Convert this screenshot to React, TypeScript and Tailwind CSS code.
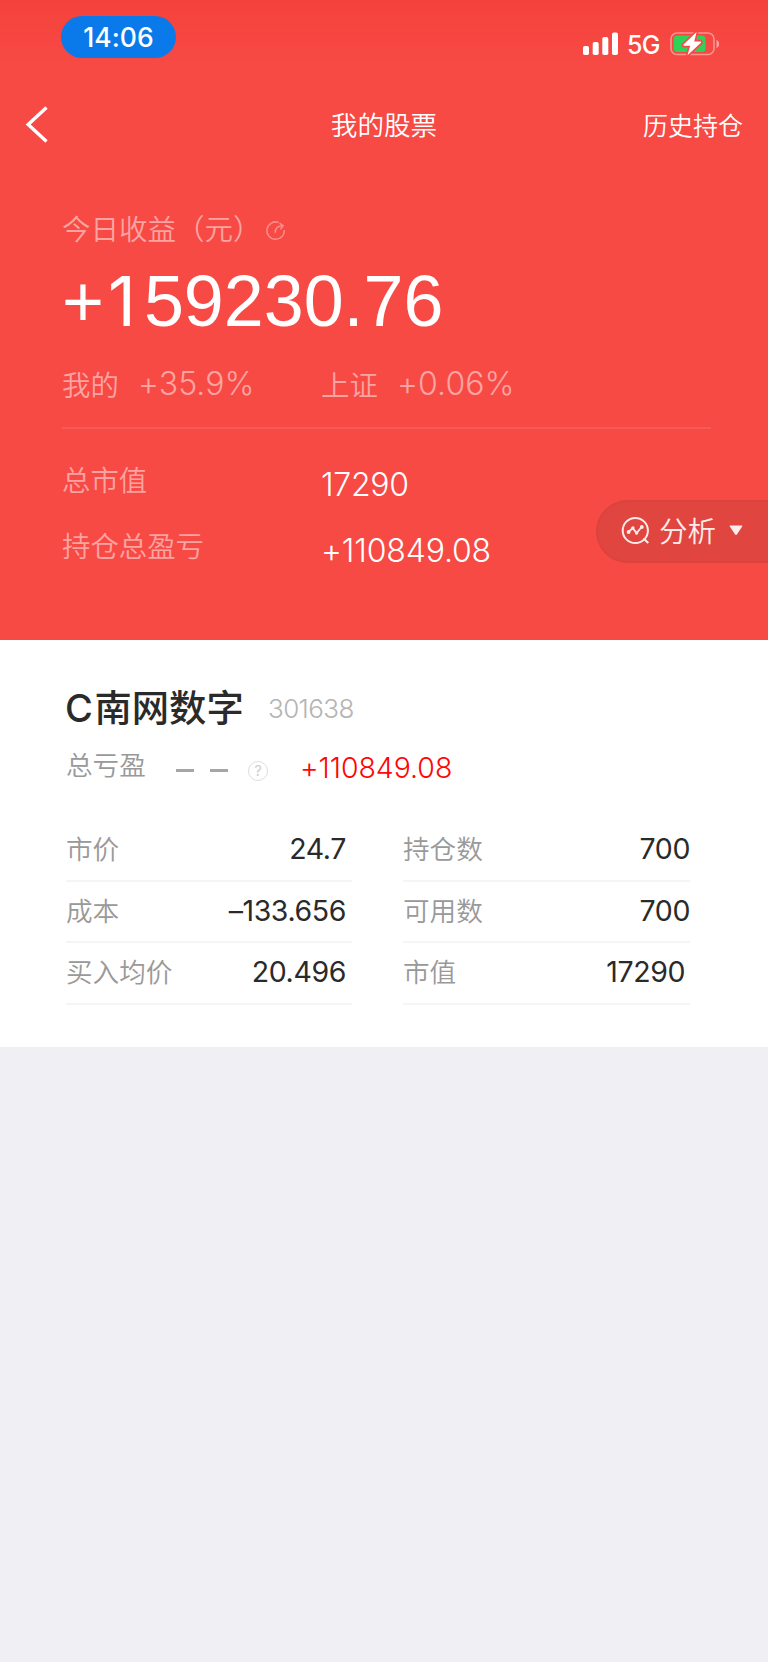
import React from "react";

const CJK = "font-['Noto_Sans_CJK_SC',sans-serif]";
const NUM = "font-['Inter','Noto_Sans_CJK_SC',sans-serif]";

function StatusBar() {
  return (
    <div className="flex h-[88px] items-start justify-between pl-[61px] pr-[48px] pt-4">
      <div
        className={`flex h-[41.5px] w-[115px] items-center justify-center rounded-full bg-[#0a7aeb] pt-px text-[26.5px] font-medium leading-none tracking-[0.1px] ${NUM}`}
      >
        <span>14:06</span>
      </div>
      <div className="mt-4 flex h-[24px] items-center">
        <svg width="36" height="24" viewBox="0 0 36 24" fill="#fff">
          <rect x="0" y="14" width="6" height="9" rx="1.8" />
          <rect x="9.7" y="10" width="6" height="13" rx="1.8" />
          <rect x="19.3" y="5" width="6" height="18" rx="1.8" />
          <rect x="29" y="0.5" width="6" height="22.5" rx="1.8" />
        </svg>
        <span className={`ml-[8px] mt-[2px] w-[35px] text-[25px] font-medium leading-6 tracking-[-0.6px] ${NUM}`}>5G</span>
        <svg className="ml-[8px]" width="50" height="24" viewBox="0 0 50 24">
          <rect x="1" y="1" width="43" height="21.5" rx="6" fill="none" stroke="#fff" strokeOpacity="0.42" strokeWidth="1.6" />
          <path d="M46.5 8v8c1.6-.6 2.6-2.2 2.6-4s-1-3.4-2.6-4z" fill="#fff" fillOpacity="0.5" />
          <rect x="3.6" y="3.4" width="32" height="16.7" rx="3.6" fill="#30d158" />
          <path
            d="M26.6 0 13.6 12.6c-.5.6-.2 1.2.6 1.2h6l-2.7 9.4 13.4-12.4c.5-.6.2-1.3-.6-1.3h-6.1z"
            fill="#fff"
            stroke="#f74a45"
            strokeWidth="3.4"
            strokeLinejoin="round"
            paintOrder="stroke"
          />
        </svg>
      </div>
    </div>
  );
}

function NavBar() {
  return (
    <div className={`grid h-[72px] grid-cols-[1fr_auto_1fr] items-center pl-[25px] pr-[25px] ${CJK}`}>
      <svg width="24" height="38" viewBox="0 0 24 38" fill="none" stroke="#fff" strokeWidth="3.4">
        <path d="M21.5 2.5 3.2 19.5l18.3 17" />
      </svg>
      <h1 className="-mt-px text-[26.6px] font-[350] leading-10">我的股票</h1>
      <button className="-mt-px justify-self-end text-[25px] font-[350] leading-10">历史持仓</button>
    </div>
  );
}

function Analysis() {
  return (
    <button className="absolute right-0 top-[500px] flex h-[63px] w-[172px] items-center rounded-l-full border-2 border-r-0 border-[#da433e] bg-[#e0463f] pl-[23px]">
      <svg className="-mt-[2px]" width="30" height="30" viewBox="0 0 30 30" fill="none" stroke="#fdeceb" strokeWidth="2">
        <circle cx="14.3" cy="14.5" r="12.6" />
        <path d="m22.5 22.5 4.8 4.5" />
        <path d="m7.6 16 4-4 4 5 5-6" strokeWidth="1.8" />
        <g fill="#fdeceb" stroke="none">
          <circle cx="7.6" cy="16" r="1.9" />
          <circle cx="11.9" cy="12" r="1.7" />
          <circle cx="15.6" cy="17" r="1.7" />
          <circle cx="20.8" cy="11" r="1.9" />
        </g>
      </svg>
      <span className={`-mt-[3px] ml-[8px] text-[28.5px] font-[350] leading-10 text-[#fdeceb] ${CJK}`}>分析</span>
      <svg className="-mt-[2px] ml-[13px]" width="14" height="11" viewBox="0 0 14 11">
        <path d="M1.2.5h11.6q1 .2.4 1.1L7.9 9.6q-.9.9-1.8 0L.8 1.6Q.2.7 1.2.5z" fill="#fdeceb" />
      </svg>
    </button>
  );
}

function Summary() {
  return (
    <section className={`pl-[62px] pr-[57px] pt-[48px] ${CJK}`}>
      <div className="flex h-[40px] items-center text-[28.5px] font-[350] leading-10 text-[#fba4a2]">
        <span className="-mt-px w-[204px] whitespace-nowrap">今日收益（元）</span>
        <svg className="mt-[5px]" width="20" height="20" viewBox="0 0 20 20" fill="none" stroke="#fa8f8c" strokeWidth="1.5">
          <path d="M12.5 1.4A8.7 8.7 0 1 0 18.3 9" />
          <path d="M9.2 11.8c0-4 2-6.6 6.8-7" />
          <path d="m13.5 2.2 3.6 2.5-2.6 3.5" />
        </svg>
      </div>
      <div className="mt-[13px] h-[80px] whitespace-nowrap font-['Liberation_Sans',sans-serif] text-[71.8px] leading-[80px]">
        +<span className="inline-block w-[40px] pl-[4px] font-['Inter',sans-serif] text-[68.5px] leading-none">1</span>59230.76
      </div>
      <div className="mt-[23px] flex h-[40px] items-center text-[#fba4a2]">
        <span className="w-[76px] text-[28.4px] font-[350] leading-10">我的</span>
        <span className={`w-[183px] text-[32px] font-[350] leading-10 tracking-[0.1px] ${NUM}`}>+35.9%</span>
        <span className="w-[76px] text-[28.4px] font-[350] leading-10">上证</span>
        <span className={`text-[32px] font-[350] leading-10 tracking-[0.1px] ${NUM}`}>+0.06%</span>
      </div>
      <div className="mt-[23px] h-[2px] bg-[#f85a55]" />
      <div className="mt-[35px] flex h-[40px]">
        <span className="-mt-px w-[259px] text-[28.4px] font-[350] leading-8 text-[#fba4a2]">总市值</span>
        <span className={`text-[32px] font-[350] leading-[41px] tracking-[-0.3px] ${NUM}`}>17290</span>
      </div>
      <div className="mt-[26px] flex h-[40px]">
        <span className="-mt-px w-[259px] text-[28.4px] font-[350] leading-8 text-[#fba4a2]">持仓总盈亏</span>
        <span className={`text-[32px] font-[350] leading-[41px] tracking-[-0.15px] ${NUM}`}>+110849.08</span>
      </div>
    </section>
  );
}

type Row = { label: string; value: string; inset: string };

const LEFT: Row[] = [
  { label: "市价", value: "24.7", inset: "pr-[6px]" },
  { label: "成本", value: "–133.656", inset: "pr-[6px]" },
  { label: "买入均价", value: "20.496", inset: "pr-[6px]" },
];

const RIGHT: Row[] = [
  { label: "持仓数", value: "700", inset: "pr-0" },
  { label: "可用数", value: "700", inset: "pr-0" },
  { label: "市值", value: "17290", inset: "pr-[5px]" },
];

function Column({ rows }: { rows: Row[] }) {
  return (
    <div>
      {rows.map((r) => (
        <div key={r.label} className={`flex h-[61.5px] justify-between border-b-2 border-[#f5f5f6] ${r.inset}`}>
          <span className={`text-[26.6px] font-[350] leading-[55px] text-[#999] ${CJK}`}>{r.label}</span>
          <span className={`text-[28.5px] font-normal leading-[57px] tracking-[-0.4px] text-[#2a2a2a] ${NUM}`}>{r.value}</span>
        </div>
      ))}
    </div>
  );
}

function Holding() {
  return (
    <section className="h-[407px] bg-white pl-[66px] pr-[78px] pt-[43px]">
      <div className="flex h-[50px] items-center">
        <h2 className={`mt-px w-[202px] whitespace-nowrap text-[37.3px] font-medium leading-[50px] text-[#2a2a2a] ${NUM}`}>
          <span className="-ml-px inline-block w-[29.5px] text-[38px]">C</span>南网数字
        </h2>
        <span className={`mt-[2px] text-[26px] font-[350] leading-[50px] tracking-[-0.6px] text-[#b4b4b4] ${NUM}`}>301638</span>
      </div>
      <div className="mt-[14px] flex h-[40px]">
        <span className={`w-[110px] text-[26.6px] font-[350] leading-[34px] text-[#999] ${CJK}`}>总亏盈</span>
        <span className="mt-[22px] flex gap-4" aria-hidden="true">
          <i className="h-[2.5px] w-[18px] bg-[#a6a6a6]" />
          <i className="h-[2.5px] w-[18px] bg-[#a6a6a6]" />
        </span>
        <span className={`ml-5 mt-[13.5px] flex h-5 w-5 items-center justify-center rounded-full border-[1.5px] border-[#dedede] text-[15px] leading-none text-[#cfcfcf] ${NUM}`}>
          ?
        </span>
        <span className={`ml-[32px] text-[28.5px] font-[350] leading-[42px] tracking-[-0.05px] text-[#ff0505] ${NUM}`}>+110849.08</span>
      </div>
      <div className="mt-[33px] grid grid-cols-[286px_287px] gap-[51px]">
        <Column rows={LEFT} />
        <Column rows={RIGHT} />
      </div>
    </section>
  );
}

export default function App() {
  return (
    <div className="relative h-[1662px] w-[768px] overflow-hidden bg-[#efeff4]">
      <header className="h-[640px] bg-[#f74a45] bg-[linear-gradient(#f5413b,#f74a45_64px)] text-white">
        <StatusBar />
        <NavBar />
        <Summary />
      </header>
      <Holding />
      <Analysis />
    </div>
  );
}
